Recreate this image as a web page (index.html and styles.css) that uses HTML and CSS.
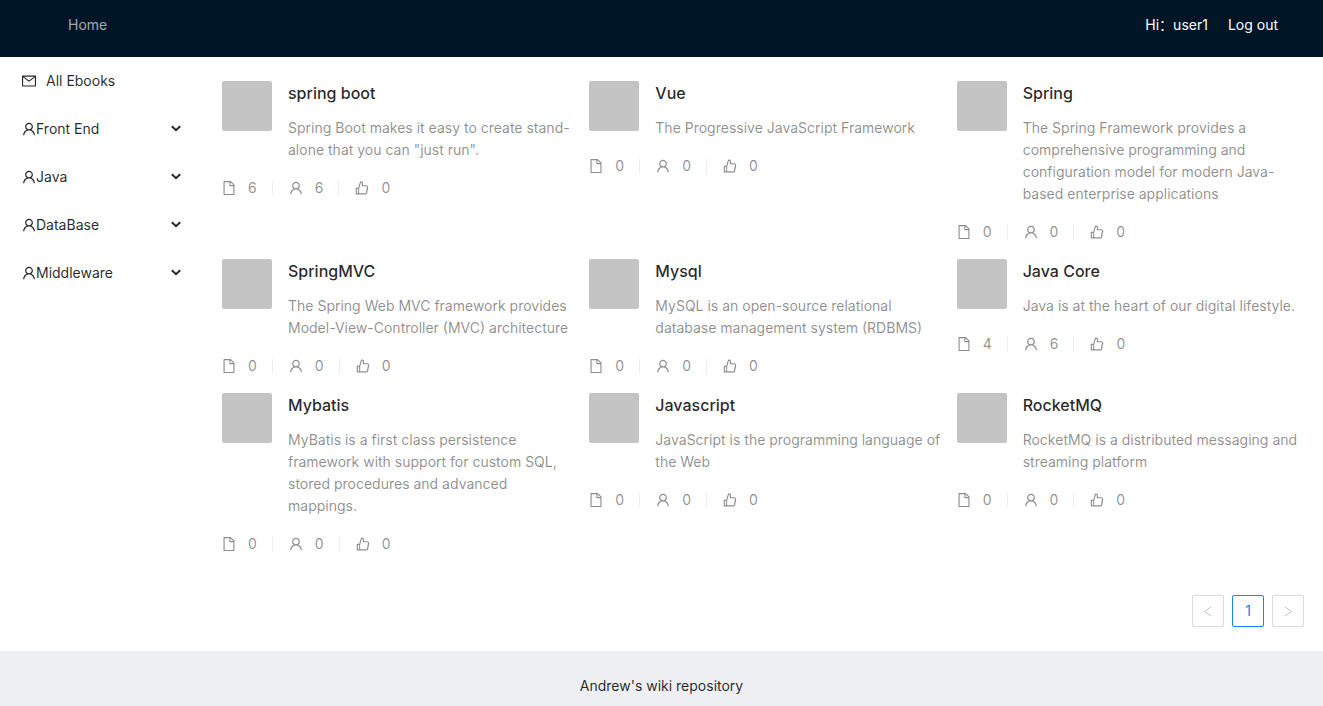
FILE: index.html
```html
<!DOCTYPE html>
<html lang="en">
<head>
<meta charset="utf-8">
<meta name="viewport" content="width=device-width, initial-scale=1">
<title>Andrew's wiki repository</title>
<link rel="stylesheet" href="styles.css">
</head>
<body>
<svg class="sprite" aria-hidden="true">
  <symbol id="mail" viewBox="64 64 896 896"><path d="M928 160H96c-17.7 0-32 14.3-32 32v640c0 17.7 14.3 32 32 32h832c17.7 0 32-14.3 32-32V192c0-17.7-14.3-32-32-32zm-40 110.8V792H136V270.8l-27.6-21.5 39.3-50.5 42.8 33.3h643.1l42.8-33.3 39.3 50.5-27.7 21.5zM833.6 232L512 482 190.4 232l-42.8-33.3-39.3 50.5 27.6 21.5 341.6 265.6a55.99 55.99 0 0 0 68.7 0L888 270.8l27.6-21.5-39.3-50.5-42.7 33.2z"/></symbol>
  <symbol id="user" viewBox="64 64 896 896"><path d="M858.5 763.6a374 374 0 0 0-80.6-119.5 375.63 375.63 0 0 0-119.5-80.6c-.4-.2-.8-.3-1.2-.5C719.5 518 760 444.7 760 362c0-137-111-248-248-248S264 225 264 362c0 82.7 40.5 156 102.8 201.1-.4.2-.8.3-1.2.5-44.8 18.9-85 46-119.5 80.6a375.63 375.63 0 0 0-80.6 119.5A371.7 371.7 0 0 0 136 901.8a8 8 0 0 0 8 8.2h60c4.4 0 7.9-3.5 8-7.8 2-77.2 33-149.5 87.8-204.3 56.7-56.7 132-87.9 212.2-87.9s155.5 31.2 212.2 87.9C779 752.7 810 825 812 902.2c.1 4.4 3.6 7.8 8 7.8h60a8 8 0 0 0 8-8.2c-1-47.8-10.9-94.3-29.5-138.2zM512 534c-45.9 0-89.1-17.9-121.6-50.4S340 407.9 340 362c0-45.9 17.9-89.1 50.4-121.6S466.1 190 512 190s89.1 17.9 121.6 50.4S684 316.1 684 362c0 45.9-17.9 89.1-50.4 121.6S557.9 534 512 534z"/></symbol>
  <symbol id="file" viewBox="64 64 896 896"><path d="M854.6 288.6L639.4 73.4c-6-6-14.1-9.4-22.6-9.4H192c-17.7 0-32 14.3-32 32v832c0 17.7 14.3 32 32 32h640c17.7 0 32-14.3 32-32V311.3c0-8.5-3.4-16.7-9.4-22.7zM790.2 326H602V137.8L790.2 326zm1.8 562H232V136h302v216a42 42 0 0 0 42 42h216v494z"/></symbol>
  <symbol id="like" viewBox="64 64 896 896"><path d="M885.9 533.7c16.8-22.2 26.1-49.4 26.1-77.7 0-44.9-25.1-87.4-65.5-111.1a67.67 67.67 0 0 0-34.3-9.3H572.4l6-122.9c1.4-29.7-9.1-57.9-29.5-79.4A106.62 106.62 0 0 0 471 99.9c-52 0-98 35-111.8 85.1l-85.9 311H144c-17.7 0-32 14.3-32 32v364c0 17.7 14.3 32 32 32h601.3c9.2 0 18.2-1.8 26.5-5.4 47.6-20.3 78.3-66.8 78.3-118.4 0-12.6-1.8-25-5.4-37 16.8-22.2 26.1-49.4 26.1-77.7 0-12.6-1.8-25-5.4-37 16.8-22.2 26.1-49.4 26.1-77.7-.2-12.6-2-25.1-5.6-37.1zM184 852V568h81v284h-81zm636.4-353l-21.9 19 13.9 25.4a56.2 56.2 0 0 1 6.9 27.3c0 16.5-7.2 32.2-19.6 43l-21.9 19 13.9 25.4a56.2 56.2 0 0 1 6.9 27.3c0 16.5-7.2 32.2-19.6 43l-21.9 19 13.9 25.4a56.2 56.2 0 0 1 6.9 27.3c0 22.4-13.2 42.6-33.6 51.8H329V564.8l99.5-360.5a44.1 44.1 0 0 1 42.2-32.3c7.6 0 15.1 2.2 21.1 6.7 9.9 7.4 15.2 18.6 14.6 30.5l-9.6 198.4h314.4C829 418.5 840 436.9 840 456c0 16.5-7.2 32.1-19.6 43z"/></symbol>
  <symbol id="down" viewBox="0 0 12 12"><path d="M1.8 3.2 6 7.200l4.2-4" fill="none" stroke="currentColor" stroke-width="2"/></symbol>
  <symbol id="left" viewBox="0 0 12 12"><path d="M9 2 2.600 6.500 9 11" fill="none" stroke="currentColor"/></symbol>
  <symbol id="right" viewBox="0 0 12 12"><path d="M3 2 9.400 6.500 3 11" fill="none" stroke="currentColor"/></symbol>
</svg>

<header class="header">
  <nav><a class="nav-link" href="#">Home</a></nav>
  <div class="account">
    <a class="account-link" href="#">Hi：user1</a>
    <a class="account-link" href="#">Log out</a>
  </div>
</header>

<div class="layout">
  <nav class="sider" aria-label="Categories">
    <a class="menu-item menu-all" href="#"><svg class="icon"><use href="#mail"/></svg>All Ebooks</a>
    <button class="menu-item" type="button"><svg class="icon"><use href="#user"/></svg>Front End<svg class="arrow"><use href="#down"/></svg></button>
    <button class="menu-item" type="button"><svg class="icon"><use href="#user"/></svg>Java<svg class="arrow"><use href="#down"/></svg></button>
    <button class="menu-item" type="button"><svg class="icon"><use href="#user"/></svg>DataBase<svg class="arrow"><use href="#down"/></svg></button>
    <button class="menu-item" type="button"><svg class="icon"><use href="#user"/></svg>Middleware<svg class="arrow"><use href="#down"/></svg></button>
  </nav>

  <main class="content">
    <div class="books">
      <article class="book">
        <div class="meta"><div class="cover"></div><div class="info"><h4 class="title"><a href="#">spring boot</a></h4><p class="desc">Spring Boot makes it easy to create stand-alone that you can "just run".</p></div></div>
        <ul class="stats"><li><svg class="icon"><use href="#file"/></svg>6</li><li><svg class="icon"><use href="#user"/></svg>6</li><li><svg class="icon"><use href="#like"/></svg>0</li></ul>
      </article>
      <article class="book">
        <div class="meta"><div class="cover"></div><div class="info"><h4 class="title"><a href="#">Vue</a></h4><p class="desc">The Progressive JavaScript Framework</p></div></div>
        <ul class="stats"><li><svg class="icon"><use href="#file"/></svg>0</li><li><svg class="icon"><use href="#user"/></svg>0</li><li><svg class="icon"><use href="#like"/></svg>0</li></ul>
      </article>
      <article class="book">
        <div class="meta"><div class="cover"></div><div class="info"><h4 class="title"><a href="#">Spring</a></h4><p class="desc">The Spring Framework provides a comprehensive programming and configuration model for modern Java-based enterprise applications</p></div></div>
        <ul class="stats"><li><svg class="icon"><use href="#file"/></svg>0</li><li><svg class="icon"><use href="#user"/></svg>0</li><li><svg class="icon"><use href="#like"/></svg>0</li></ul>
      </article>
      <article class="book">
        <div class="meta"><div class="cover"></div><div class="info"><h4 class="title"><a href="#">SpringMVC</a></h4><p class="desc">The Spring Web MVC framework provides Model-View-Controller (MVC) architecture</p></div></div>
        <ul class="stats"><li><svg class="icon"><use href="#file"/></svg>0</li><li><svg class="icon"><use href="#user"/></svg>0</li><li><svg class="icon"><use href="#like"/></svg>0</li></ul>
      </article>
      <article class="book">
        <div class="meta"><div class="cover"></div><div class="info"><h4 class="title"><a href="#">Mysql</a></h4><p class="desc">MySQL is an open-source relational database management system (RDBMS)</p></div></div>
        <ul class="stats"><li><svg class="icon"><use href="#file"/></svg>0</li><li><svg class="icon"><use href="#user"/></svg>0</li><li><svg class="icon"><use href="#like"/></svg>0</li></ul>
      </article>
      <article class="book">
        <div class="meta"><div class="cover"></div><div class="info"><h4 class="title"><a href="#">Java Core</a></h4><p class="desc">Java is at the heart of our digital lifestyle.</p></div></div>
        <ul class="stats"><li><svg class="icon"><use href="#file"/></svg>4</li><li><svg class="icon"><use href="#user"/></svg>6</li><li><svg class="icon"><use href="#like"/></svg>0</li></ul>
      </article>
      <article class="book">
        <div class="meta"><div class="cover"></div><div class="info"><h4 class="title"><a href="#">Mybatis</a></h4><p class="desc">MyBatis is a first class persistence framework with support for custom SQL, stored procedures and advanced mappings.</p></div></div>
        <ul class="stats"><li><svg class="icon"><use href="#file"/></svg>0</li><li><svg class="icon"><use href="#user"/></svg>0</li><li><svg class="icon"><use href="#like"/></svg>0</li></ul>
      </article>
      <article class="book">
        <div class="meta"><div class="cover"></div><div class="info"><h4 class="title"><a href="#">Javascript</a></h4><p class="desc">JavaScript is the programming language of the Web</p></div></div>
        <ul class="stats"><li><svg class="icon"><use href="#file"/></svg>0</li><li><svg class="icon"><use href="#user"/></svg>0</li><li><svg class="icon"><use href="#like"/></svg>0</li></ul>
      </article>
      <article class="book">
        <div class="meta"><div class="cover"></div><div class="info"><h4 class="title"><a href="#">RocketMQ</a></h4><p class="desc">RocketMQ is a distributed messaging and streaming platform</p></div></div>
        <ul class="stats"><li><svg class="icon"><use href="#file"/></svg>0</li><li><svg class="icon"><use href="#user"/></svg>0</li><li><svg class="icon"><use href="#like"/></svg>0</li></ul>
      </article>
    </div>
    <nav class="pagination" aria-label="Pages">
      <button class="page" type="button" disabled aria-label="Previous page"><svg class="page-icon"><use href="#left"/></svg></button>
      <button class="page page-current" type="button" aria-current="page">1</button>
      <button class="page" type="button" disabled aria-label="Next page"><svg class="page-icon"><use href="#right"/></svg></button>
    </nav>
  </main>
</div>

<footer class="footer">Andrew's wiki repository</footer>
</body>
</html>
```

FILE: styles.css
```css
* {
  box-sizing: border-box;
}

body {
  margin: 0;
  min-height: 100vh;
  display: flex;
  flex-direction: column;
  background: #fff;
  color: rgba(0, 0, 0, 0.85);
  font-family: Inter, "Noto Sans CJK SC", sans-serif;
  font-size: 14px;
  line-height: 22px;
}

a {
  color: inherit;
  text-decoration: none;
}

button {
  font: inherit;
  color: inherit;
  background: none;
  border: 0;
  cursor: pointer;
}

.sprite {
  position: absolute;
  width: 0;
  height: 0;
}

.icon {
  width: 14px;
  height: 14px;
  flex: none;
  fill: currentColor;
}

.header {
  display: flex;
  justify-content: space-between;
  padding: 14px 45px 21px 68px;
  background: #001525;
}

.nav-link {
  color: rgba(255, 255, 255, 0.65);
}

.account {
  display: flex;
  gap: 20px;
}

.account-link {
  color: #fff;
}

.layout {
  display: flex;
}

.sider {
  display: flex;
  flex-direction: column;
  gap: 8px;
  width: 200px;
  flex: none;
  padding-top: 4px;
}

.menu-item {
  display: flex;
  align-items: center;
  height: 40px;
  padding: 0 18px 0 22px;
  text-align: left;
}

.menu-all {
  gap: 10px;
}

.arrow {
  width: 12px;
  height: 12px;
  margin-left: auto;
}

.content {
  flex: 1;
  min-width: 0;
  padding: 24px 19px 24px 22px;
}

.books {
  display: grid;
  grid-template-columns: repeat(3, minmax(0, 1fr));
  gap: 16px 20px;
  padding-bottom: 16px;
}

.meta {
  display: flex;
  gap: 16px;
  margin-bottom: 16px;
}

.cover {
  width: 50px;
  height: 50px;
  flex: none;
  border-radius: 2px;
  background: #c4c4c4;
}

/* Text may run a little into the column gap */
.info {
  flex: 1;
  min-width: 0;
  margin-right: -8px;
}

.title {
  margin: 0 0 12px;
  font-size: 16px;
  line-height: 24px;
  font-weight: 500;
}

.desc {
  margin: 0;
  color: rgba(0, 0, 0, 0.45);
}

.stats {
  display: flex;
  margin: 0;
  padding: 0;
  list-style: none;
  color: rgba(0, 0, 0, 0.45);
}

.stats li {
  position: relative;
  display: flex;
  align-items: center;
  gap: 12px;
  padding: 0 16px;
}

.stats li:first-child {
  padding-left: 0;
}

.stats li:not(:last-child)::after {
  content: "";
  position: absolute;
  right: 0;
  top: 4px;
  width: 1px;
  height: 14px;
  background: #ececec;
}

.pagination {
  display: flex;
  justify-content: flex-end;
  gap: 8px;
  margin-top: 24px;
}

.page {
  display: flex;
  align-items: center;
  justify-content: center;
  width: 32px;
  height: 32px;
  padding: 0;
  border: 1px solid #d9d9d9;
  border-radius: 2px;
  color: rgba(0, 0, 0, 0.25);
}

.page-current {
  border-color: #1785f8;
  color: #1785f8;
}

.page-icon {
  width: 12px;
  height: 12px;
}

.footer {
  flex: 1;
  padding: 24px 50px 8px;
  background: #eeeff3;
  text-align: center;
}
```
